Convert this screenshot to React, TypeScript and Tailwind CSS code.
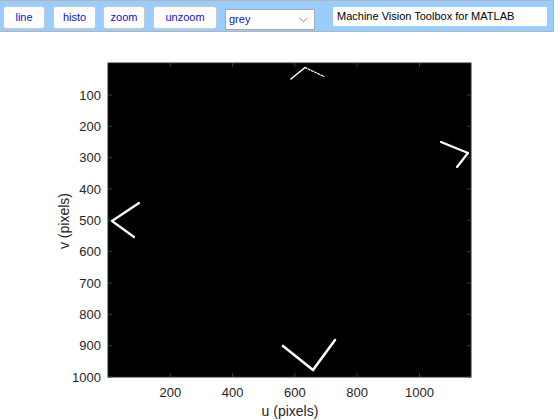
import React from "react";

const font = { fontFamily: '"Liberation Sans", Arial, sans-serif' };

// screen coords of the image axes
const left = 108;
const right = 471;
const top = 63;
const bottom = 377;
const ux = (u: number) => left + u * 0.3115;
const vy = (v: number) => 63.7 + v * 0.3133;

const xTicks = [200, 400, 600, 800, 1000];
const yTicks = [100, 200, 300, 400, 500, 600, 700, 800, 900, 1000];

function ToolButton({ label, width }: { label: string; width: string }) {
  return (
    <button
      className={`${width} mt-[5px] h-[23px] shrink-0 rounded-[3px] border border-[#c9c9c9] bg-white text-[11px] text-[#1010c8]`}
    >
      {label}
    </button>
  );
}

function Toolbar() {
  return (
    <div
      className="flex h-[32px] w-[554px] items-start border-t border-r border-b border-[#b4b4b4] bg-[#99ccff] pl-[3px]"
      style={font}
    >
      <ToolButton label="line" width="w-[42px]" />
      <div className="w-[8px] shrink-0" />
      <ToolButton label="histo" width="w-[43px]" />
      <div className="w-[7px] shrink-0" />
      <ToolButton label="zoom" width="w-[42px]" />
      <div className="w-[8px] shrink-0" />
      <ToolButton label="unzoom" width="w-[64px]" />
      <div className="w-[8px] shrink-0" />
      {/* colormap select */}
      <div className="mt-[8px] flex h-[21px] w-[90px] shrink-0 items-center justify-between border border-[#a9a9a9] bg-white pl-[3px] pr-[6px]">
        <span className="text-[11px] text-[#1010c8]">grey</span>
        <svg width="9" height="6" viewBox="0 0 9 6">
          <path d="M0.5 0.8 L4.5 4.8 L8.5 0.8" fill="none" stroke="#8a8a8a" strokeWidth="1" />
        </svg>
      </div>
      <div className="w-[18px] shrink-0" />
      <div className="mt-[6px] flex h-[19px] w-[214px] shrink-0 items-center bg-white pl-[4px] text-[11px] text-black">
        Machine Vision Toolbox for MATLAB
      </div>
    </div>
  );
}

function Plot() {
  const tick = "#3c3c3c";
  const label = "#262626";
  return (
    <svg width="560" height="388" viewBox="0 32 560 388" style={font}>
      <rect x={left} y={top} width={right - left} height={bottom - top} fill="#000" stroke="#262626" />
      {xTicks.map((u) => (
        <g key={u}>
          <line x1={ux(u)} x2={ux(u)} y1={top} y2={top + 4} stroke={tick} />
          <line x1={ux(u)} x2={ux(u)} y1={bottom} y2={bottom - 4} stroke={tick} />
          <text x={ux(u)} y={392} textAnchor="middle" dominantBaseline="central" fontSize="13" fill={label}>
            {u}
          </text>
        </g>
      ))}
      {yTicks.map((v) => (
        <g key={v}>
          <line x1={left} x2={left + 4} y1={vy(v)} y2={vy(v)} stroke={tick} />
          <line x1={right} x2={right - 4} y1={vy(v)} y2={vy(v)} stroke={tick} />
          <text x={101} y={vy(v)} textAnchor="end" dominantBaseline="central" fontSize="13" fill={label}>
            {v}
          </text>
        </g>
      ))}
      {/* detected corner features */}
      <g fill="none" stroke="#fff" strokeLinecap="round" strokeLinejoin="round">
        <polyline points="139,203 112,221 134,237" strokeWidth="2.2" />
        <polyline points="291,79 305,67.5" strokeWidth="1.6" />
        <polyline points="305,67.5 324,76.5" strokeWidth="1.2" strokeDasharray="2 1.5" />
        <polyline points="441,142 468,153 457,167" strokeWidth="2.2" />
        <polyline points="283,346 313,370 335,340" strokeWidth="2.6" />
      </g>
      <text x={290} y={411} textAnchor="middle" dominantBaseline="central" fontSize="14" fill={label}>
        u (pixels)
      </text>
      <text
        x={64}
        y={221}
        textAnchor="middle"
        dominantBaseline="central"
        fontSize="14"
        fill={label}
        transform="rotate(-90 64 221)"
      >
        v (pixels)
      </text>
    </svg>
  );
}

export default function App() {
  return (
    <div className="h-[420px] w-[560px] overflow-hidden bg-white">
      <Toolbar />
      <Plot />
    </div>
  );
}
